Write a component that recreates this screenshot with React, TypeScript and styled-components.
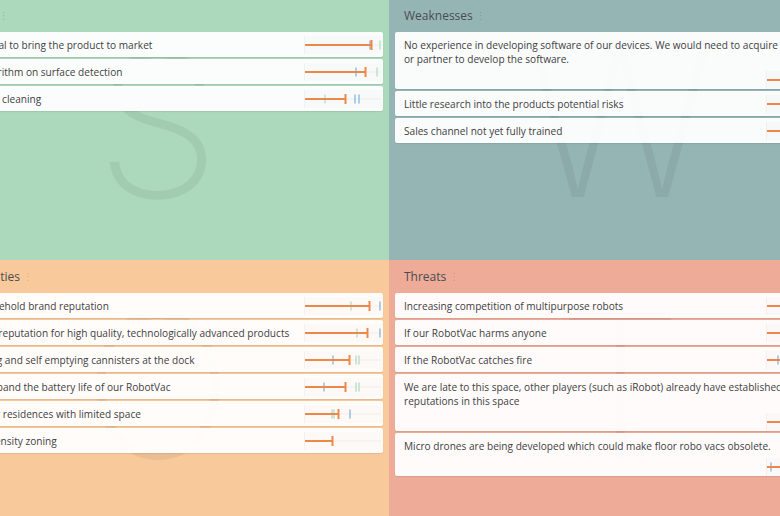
import React from "react";
import styled, { createGlobalStyle } from "styled-components";

const GlobalStyle = createGlobalStyle`
  html, body { margin: 0; padding: 0; overflow: hidden; background: #ffffff; }
  body { font-family: "Open Sans", "Liberation Sans", sans-serif; }
  #root { width: 780px; height: 516px; overflow: hidden; }
`;

type Tick = { x: number; c: "b" | "g" };
type Item = { text: string; value: number; ticks?: Tick[] };
type Quad = { letter: string; title: string; bg: string; items: Item[] };

const QUADS: Quad[] = [
  {
    letter: "S",
    title: "Strengths",
    bg: "#acd8bb",
    items: [
      { text: "Strong capital to bring the product to market", value: 67, ticks: [{ x: 65, c: "b" }, { x: 75, c: "g" }] },
      { text: "Proven algorithm on surface detection", value: 61, ticks: [{ x: 51, c: "b" }, { x: 72, c: "g" }] },
      { text: "Deep carpet cleaning", value: 41, ticks: [{ x: 20, c: "g" }, { x: 50, c: "b" }, { x: 54, c: "b" }] },
    ],
  },
  {
    letter: "W",
    title: "Weaknesses",
    bg: "#95b4b4",
    items: [
      { text: "No experience in developing software of our devices. We would need to acquire or partner to develop the software.", value: 52 },
      { text: "Little research into the products potential risks", value: 44 },
      { text: "Sales channel not yet fully trained", value: 48 },
    ],
  },
  {
    letter: "O",
    title: "Opportunities",
    bg: "#f8c99b",
    items: [
      { text: "Strong household brand reputation", value: 65, ticks: [{ x: 46, c: "g" }, { x: 75, c: "b" }] },
      { text: "Established reputation for high quality, technologically advanced products", value: 63, ticks: [{ x: 52, c: "g" }, { x: 75, c: "b" }] },
      { text: "Self charging and self emptying cannisters at the dock", value: 45, ticks: [{ x: 28, c: "b" }, { x: 51, c: "g" }, { x: 54, c: "g" }] },
      { text: "Ability to expand the battery life of our RobotVac", value: 41, ticks: [{ x: 19, c: "b" }, { x: 51, c: "g" }, { x: 54, c: "g" }] },
      { text: "Compact for residences with limited space", value: 34, ticks: [{ x: 27, c: "g" }, { x: 29, c: "g" }, { x: 45, c: "b" }] },
      { text: "New high density zoning", value: 28 },
    ],
  },
  {
    letter: "T",
    title: "Threats",
    bg: "#edab98",
    items: [
      { text: "Increasing competition of multipurpose robots", value: 58 },
      { text: "If our RobotVac harms anyone", value: 50 },
      { text: "If the RobotVac catches fire", value: 36, ticks: [{ x: 11, c: "b" }] },
      { text: "We are late to this space, other players (such as iRobot) already have established reputations in this space", value: 46 },
      { text: "Micro drones are being developed which could make floor robo vacs obsolete.", value: 24, ticks: [{ x: 4, c: "b" }] },
    ],
  },
];

const Board = styled.div`
  display: grid;
  grid-template-columns: 462px 462px;
  grid-template-rows: 261px 261px;
  width: 924px;
  margin: -1px 0 0 -73px;
`;

const Quadrant = styled.section<{ $bg: string }>`
  position: relative;
  display: flex;
  flex-direction: column;
  padding: 0 6px;
  background: ${(p) => p.$bg};
  overflow: hidden;
`;

const Watermark = styled.div`
  position: absolute;
  inset: 0;
  display: flex;
  align-items: center;
  justify-content: center;
  padding-bottom: 12px;
  font-family: Inter, "Open Sans", sans-serif;
  font-weight: 200;
  font-size: 200px;
  line-height: 1;
  color: rgba(0, 0, 0, 0.055);
  pointer-events: none;
  user-select: none;
`;

const Header = styled.header`
  position: relative;
  display: flex;
  align-items: center;
  gap: 3px;
  height: 33px;
  padding-left: 9px;
  font-size: 12px;
  color: #4a4d50;
`;

const Handle = styled.span`
  font-family: "DejaVu Sans", sans-serif;
  font-size: 10px;
  color: rgba(0, 0, 0, 0.18);
`;

const CardList = styled.div`
  position: relative;
  display: flex;
  flex-direction: column;
  gap: 2px;
`;

const Card = styled.div`
  display: flex;
  flex-wrap: wrap;
  align-items: center;
  padding-left: 9px;
  background: rgba(255, 255, 255, 0.95);
  border-radius: 2px;
  box-shadow: 0 1px 1px rgba(0, 0, 0, 0.08);
`;

const CardText = styled.div`
  flex: 1 1 auto;
  max-width: calc(100% - 55px);
  padding: 6px 0 5px;
  font-size: 10.1px;
  line-height: 14px;
  color: #3f4143;
`;

const SliderBox = styled.div`
  flex: none;
  width: 79px;
  height: 18px;
  margin-left: auto;
  background: rgba(0, 0, 0, 0.012);
  border-left: 1px solid rgba(0, 0, 0, 0.035);
  box-sizing: border-box;
  display: flex;
`;

const ORANGE = "#ee8848";
const BLUE = "#8fbadb";
const GREEN = "#b7e0c3";

function Slider({ value, ticks = [] }: { value: number; ticks?: Tick[] }) {
  return (
    <SliderBox>
      <svg width="78" height="18" viewBox="0 0 78 18">
        <line x1="0" y1="9" x2="76" y2="9" stroke="rgba(0,0,0,0.05)" strokeWidth="1" />
        {ticks.map((t, i) => (
          <line key={i} x1={t.x} y1="4.5" x2={t.x} y2="13.5" stroke={t.c === "b" ? BLUE : GREEN} strokeWidth="1.4" />
        ))}
        <line x1="0" y1="9" x2={value} y2="9" stroke={ORANGE} strokeWidth="2" />
        <line x1={value - 0.5} y1="4" x2={value - 0.5} y2="14" stroke={ORANGE} strokeWidth="2" />
      </svg>
    </SliderBox>
  );
}

export default function App() {
  return (
    <>
      <GlobalStyle />
      <Board>
        {QUADS.map((q) => (
          <Quadrant key={q.letter} $bg={q.bg}>
            <Watermark aria-hidden="true">{q.letter}</Watermark>
            <Header>
              {q.title}
              <Handle>⋮</Handle>
            </Header>
            <CardList>
              {q.items.map((it, i) => (
                <Card key={i}>
                  <CardText>{it.text}</CardText>
                  <Slider value={it.value} ticks={it.ticks} />
                </Card>
              ))}
            </CardList>
          </Quadrant>
        ))}
      </Board>
    </>
  );
}
